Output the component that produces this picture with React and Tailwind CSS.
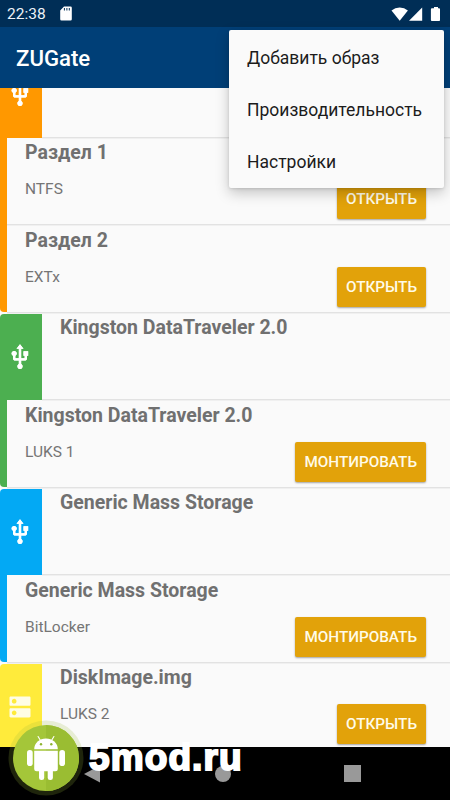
import { MdUsb, MdDns } from "react-icons/md";

const rows = [
  { device: true, color: "bg-[#ff9800]", icon: "usb" },
  { color: "bg-[#ff9800]", title: "Раздел 1", sub: "NTFS", action: "ОТКРЫТЬ" },
  { color: "bg-[#ff9800]", title: "Раздел 2", sub: "EXTx", action: "ОТКРЫТЬ", last: true },
  { device: true, color: "bg-[#4caf50]", icon: "usb", title: "Kingston DataTraveler 2.0" },
  { color: "bg-[#4caf50]", title: "Kingston DataTraveler 2.0", sub: "LUKS 1", action: "МОНТИРОВАТЬ", last: true },
  { device: true, color: "bg-[#03a9f4]", icon: "usb", title: "Generic Mass Storage" },
  { color: "bg-[#03a9f4]", title: "Generic Mass Storage", sub: "BitLocker", action: "МОНТИРОВАТЬ", last: true },
  { device: true, color: "bg-[#ffeb3b]", icon: "disk", title: "DiskImage.img", sub: "LUKS 2", action: "ОТКРЫТЬ" },
];

function Row({ row }) {
  return (
    <div className="flex h-[87.5px] shrink-0">
      <div
        className={`flex shrink-0 items-center justify-center ${row.color} ${
          row.device ? "w-[42px] rounded-tl-[4px] pr-[2px]" : "w-[7px]"
        } ${row.last ? "mb-[1px] rounded-bl-[4px]" : ""} ${row.device ? "mt-[1px]" : ""}`}
      >
        {row.icon === "usb" && <MdUsb className="size-7 text-white drop-shadow-[0_0_0.5px_white]" />}
        {row.icon === "disk" && <MdDns className="size-7 text-[#fffde5]" />}
      </div>
      <div className="flex min-w-0 flex-1 flex-col border-b border-[#e2e2e2] pl-[18px] pr-6 shadow-[0_0.5px_0_#e6e6e6]">
        <div className="mt-[2.8px] h-[26px] whitespace-nowrap text-[19.5px] leading-[26px] font-bold text-[#707070]">
          {row.title}
        </div>
        <div className="flex justify-between">
          <span className="mt-[13px] text-[15.5px] leading-5 text-[#757575]">{row.sub}</span>
          {row.action && (
            <button className="mt-[13.2px] h-10 rounded-[2px] bg-[#e2a20a] px-[9px] text-[15.25px] leading-[41px] font-medium whitespace-nowrap text-[#fffbe8] shadow-[0_1px_2px_rgba(0,0,0,0.35)]">
              {row.action}
            </button>
          )}
        </div>
      </div>
    </div>
  );
}

function AndroidBadge() {
  return (
    <svg className="absolute left-[7px] top-[719px]" width="78" height="78" viewBox="7 719 78 78">
      <circle cx="46" cy="758" r="37.5" fill="#9cb93b" opacity="0.2" />
      <circle cx="46" cy="758" r="33" fill="#a4c639" />
      <path d="M46 725a33 33 0 0 1 0 66z" fill="#9abd32" />
      <g fill="#fff">
        <path d="M34.2 749.2a11.8 10.8 0 0 1 23.6 0z" />
        <path d="M34.2 750.8h23.6v18a2.5 2.5 0 0 1-2.5 2.5H36.7a2.5 2.5 0 0 1-2.5-2.5z" />
        <rect x="27" y="750" width="5.7" height="16" rx="2.8" />
        <rect x="59.3" y="750" width="5.7" height="16" rx="2.8" />
        <rect x="39" y="765" width="5.2" height="15" rx="2.3" />
        <rect x="47.7" y="765" width="5.2" height="15" rx="2.3" />
      </g>
      <path d="M40.5 740.5l-2.4-4M51.5 740.5l2.4-4" stroke="#fff" strokeWidth="1.1" strokeLinecap="round" />
      <circle cx="41" cy="744.3" r="1.2" fill="#8db430" />
      <circle cx="51.3" cy="744.3" r="1.2" fill="#8db430" />
    </svg>
  );
}

export default function App() {
  return (
    <div className="relative flex h-[800px] w-[450px] flex-col overflow-hidden bg-[#fafafa] font-['Roboto',sans-serif]">
      <header className="flex h-[27px] shrink-0 items-center bg-[#002e56] pl-[7px] pr-[10px] text-white">
        <span className="pt-[1px] text-[15.5px] leading-[26px] text-[#edf3f8]">22:38</span>
        <svg className="ml-[14px]" width="12" height="15" viewBox="0 0 12 15">
          <path d="M4 .5h6.5a1.3 1.3 0 0 1 1.3 1.3v11.4a1.3 1.3 0 0 1-1.3 1.3h-9A1.3 1.3 0 0 1 .2 13.2V4.5z" fill="#fff" />
          <path d="M4.4 2v2.5M6.9 2v2.5M9.3 2v2.5" stroke="#002e56" strokeWidth="1" />
        </svg>
        <svg className="ml-auto" width="49" height="16" viewBox="0 0 49 16" fill="#fff">
          <path d="M8.7 14.8L.5 4.4a13.2 13.2 0 0 1 16.4 0z" />
          <path d="M31.2 1.4v13.4H18z" />
          <path d="M41 2.2h2V.9h4v1.3h1.1a1 1 0 0 1 1 1v10.7a1 1 0 0 1-1 1h-7.2a1 1 0 0 1-1-1V3.2a1 1 0 0 1 1-1z" />
        </svg>
      </header>
      <div className="flex h-[60.5px] shrink-0 items-center bg-[#003f77] pl-4 pt-[2px]">
        <h1 className="text-[22.2px] leading-7 font-medium text-white">ZUGate</h1>
      </div>
      <main className="min-h-0 flex-1 overflow-hidden">
        <div className="-mt-[37.5px] flex flex-col">
          {rows.map((row, i) => (
            <Row key={i} row={row} />
          ))}
        </div>
      </main>
      <nav className="flex h-[53px] shrink-0 items-center bg-black pl-[84px]">
        <svg width="16" height="18" viewBox="0 0 16 18">
          <path d="M0 9L16 .5v17z" fill="#999" />
        </svg>
        <span className="ml-[115px] size-4 rounded-full bg-[#999]" />
        <span className="ml-[113px] size-[17px] bg-[#999]" />
      </nav>
      <div className="absolute left-[229px] top-[30px] flex h-[158px] w-[215px] flex-col rounded-[2px] bg-[#fafafa] pt-[2px] pl-[18px] text-[17.5px] text-[#1c1c1c] shadow-[0_5px_14px_rgba(0,0,0,0.22),0_1px_3px_rgba(0,0,0,0.12)]">
        <span className="h-[52px] leading-[52px]">Добавить образ</span>
        <span className="h-[52px] leading-[52px]">Производительность</span>
        <span className="h-[52px] leading-[52px]">Настройки</span>
      </div>
      <AndroidBadge />
      <span className="absolute left-[89px] top-[736px] font-['Liberation_Sans',sans-serif] text-[37px] leading-[44px] font-bold tracking-[1.1px] whitespace-nowrap text-white [-webkit-text-stroke:2px_white] [stroke-linejoin:round]">
        5mod.ru
      </span>
    </div>
  );
}
